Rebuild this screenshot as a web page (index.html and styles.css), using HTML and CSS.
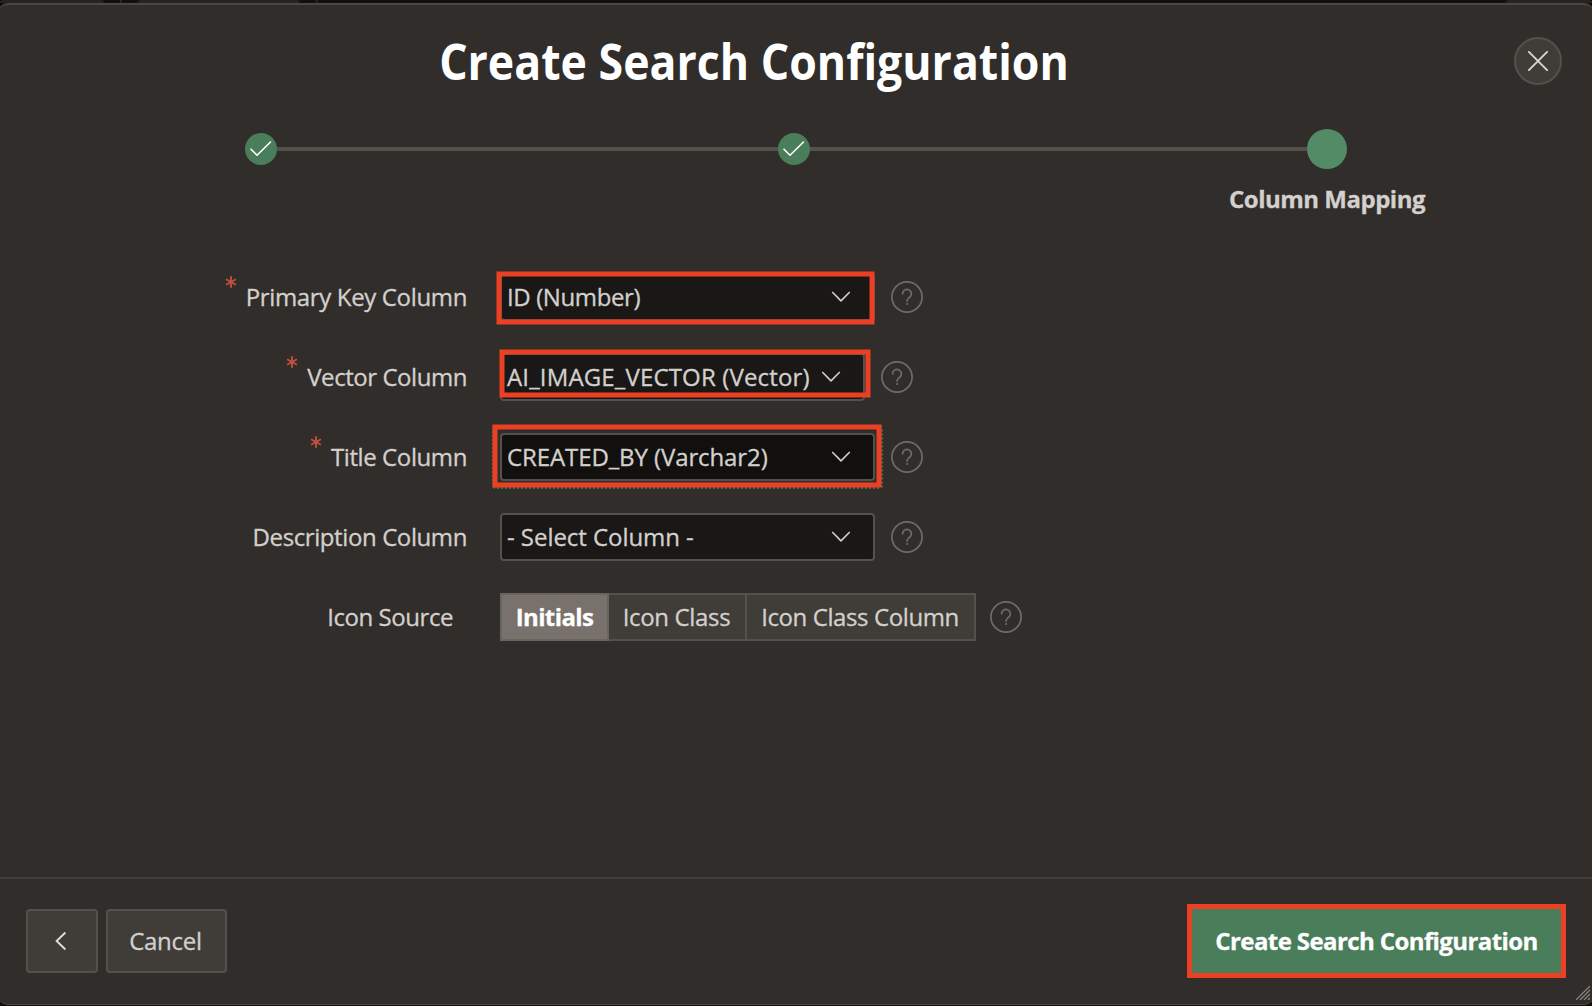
FILE: index.html
```
<!DOCTYPE html>
<html lang="en">
<head>
<meta charset="utf-8">
<title>Create Search Configuration</title>
<link rel="stylesheet" href="styles.css">
</head>
<body>
<svg class="defs" aria-hidden="true">
  <symbol id="check" viewBox="0 0 32 32"><path d="M6 16.2l6 6L25.5 9" fill="none" stroke="#fff" stroke-width="1.6" stroke-linecap="round" stroke-linejoin="round"/></symbol>
  <symbol id="chevron" viewBox="0 0 20 12"><path d="M1.7 1.5L10 9.8l8.3-8.3" fill="none" stroke="#cfccc8" stroke-width="1.7" stroke-linecap="round" stroke-linejoin="round"/></symbol>
  <symbol id="star" viewBox="0 0 12 12"><path d="M6 .3v11.4M1.1 3.2l9.8 5.6M10.9 3.2L1.1 8.8" fill="none" stroke="#c2513f" stroke-width="1.9"/></symbol>
  <symbol id="help" viewBox="0 0 32 32"><circle cx="16" cy="16" r="15.1" fill="none" stroke="#6f6c69" stroke-width="1.7"/><path d="M11.6 12.8a4.4 4.4 0 1 1 7.6 3c-1.4 1.3-3.1 1.7-3.1 4.3" fill="none" stroke="#6f6c69" stroke-width="1.7" stroke-linecap="round"/><circle cx="16.2" cy="23" r="1.1" fill="#6f6c69"/></symbol>
</svg>
<div class="backdrop"><i class="tab tab-a"></i><i class="rule"></i><i class="tab tab-b"></i><i class="rule"></i><i class="tab tab-c"></i></div>
<main class="dialog">
  <header class="header">
    <h1 class="title">Create Search Configuration</h1>
    <button class="close" aria-label="Close"><svg width="20" height="20" viewBox="0 0 20 20"><path d="M.9.9l18.2 18.2M19.1.9L.9 19.1" stroke="#d8d5d2" stroke-width="1.9" stroke-linecap="round"/></svg></button>
  </header>
  <div class="steps">
    <span class="step"><svg width="32" height="32"><use href="#check"/></svg></span>
    <span class="line"></span>
    <span class="step"><svg width="32" height="32"><use href="#check"/></svg></span>
    <span class="line"></span>
    <span class="step current"></span>
  </div>
  <div class="step-label">Column Mapping</div>
  <form class="form">
    <div class="row">
      <label class="label"><svg class="star" width="12" height="12"><use href="#star"/></svg><span class="pkc">Primary Key Column</span></label>
      <div class="select">ID (Number)<svg class="chevron" width="20" height="12"><use href="#chevron"/></svg><i class="mark mark-1"></i></div>
      <svg class="help" width="32" height="32"><use href="#help"/></svg>
    </div>
    <div class="row">
      <label class="label"><svg class="star" width="12" height="12"><use href="#star"/></svg><span class="vc">Vector Column</span></label>
      <div class="select vector"><span>AI_IMAGE_VECTOR (Vector)</span><svg class="chevron" width="20" height="12"><use href="#chevron"/></svg><i class="mark mark-2"></i></div>
      <svg class="help" width="32" height="32"><use href="#help"/></svg>
    </div>
    <div class="row">
      <label class="label"><svg class="star" width="12" height="12"><use href="#star"/></svg><span>Title Column</span></label>
      <div class="select focused"><span>CREATED_BY (Varchar2)</span><svg class="chevron" width="20" height="12"><use href="#chevron"/></svg><i class="mark mark-3"></i></div>
      <svg class="help" width="32" height="32"><use href="#help"/></svg>
    </div>
    <div class="row">
      <label class="label"><span>Description Column</span></label>
      <div class="select empty">- Select Column -<svg class="chevron" width="20" height="12"><use href="#chevron"/></svg></div>
      <svg class="help" width="32" height="32"><use href="#help"/></svg>
    </div>
    <div class="row">
      <label class="label icon-source"><span>Icon Source</span></label>
      <div class="pills"><span class="pill on">Initials</span><span class="pill mid">Icon Class</span><span class="pill last">Icon Class Column</span></div>
      <svg class="help pill-help" width="32" height="32"><use href="#help"/></svg>
    </div>
  </form>
  <footer class="footer">
    <button class="btn back" aria-label="Previous"><svg width="12" height="20" viewBox="0 0 12 20"><path d="M10.4 1.5L1.6 10l8.8 8.5" fill="none" stroke="#dedbd8" stroke-width="1.9"/></svg></button>
    <button class="btn cancel">Cancel</button>
    <button class="btn create">Create Search Configuration</button>
  </footer>
  <svg class="grip" width="14" height="14" viewBox="0 0 14 14"><path d="M0 14L14 0M4 14L14 4M8 14l6-6M12 14l2-2" stroke="#85817d" stroke-width="1.3"/></svg>
</main>
</body>
</html>
```
FILE: styles.css
```
* { box-sizing: border-box; }
body {
  margin: 0;
  width: 1592px;
  height: 1006px;
  overflow: hidden;
  background: #10100f;
  color: #d3d0cd;
  font: 400 24px/32px "Open Sans", "Noto Sans", sans-serif;
  letter-spacing: -0.4px;
  -webkit-text-stroke: .3px currentColor;
}
.defs { display: none; }
button { font: inherit; letter-spacing: inherit; color: inherit; padding: 0; }

.backdrop { display: flex; height: 3px; }
.tab { height: 3px; background: #262422; border-radius: 3px 3px 0 0; }
.tab-a { width: 104px; }
.tab-b { width: 162px; margin-left: 16px; }
.tab-c { width: 86px; margin-left: 1188px; }
.rule { width: 2px; margin-left: 16px; background: #262422; }

.dialog {
  position: relative;
  display: flex;
  flex-direction: column;
  height: 1002px;
  margin: 0 -2px;
  padding: 0 2px;
  background: #312d2a;
  border-top: 2px solid #4d4741;
  border-bottom: 1px solid #4d4741;
  border-radius: 10px;
}
.header {
  display: flex;
  align-items: center;
  height: 112px;
}
.title {
  flex: 1;
  margin: 0;
  text-align: center;
  color: #fff;
  font-size: 50px;
  line-height: 68px;
  font-weight: 700;
  letter-spacing: 0;
  transform: scaleX(.893);
  -webkit-text-stroke: 0;
}
.close {
  display: grid;
  place-items: center;
  width: 48px;
  height: 48px;
  margin: 0 30px 0 6px;
  background: #403c38;
  border: 2px solid #54504c;
  border-radius: 50%;
}

.steps { display: flex; align-items: center; height: 40px; margin: 12px 245px 0; }
.step { display: grid; width: 32px; height: 32px; border-radius: 50%; background: #4a7d59; }
.current { width: 40px; height: 40px; background: #528b65; }
.line { flex: 1; height: 4px; background: #54504c; }
.line:nth-of-type(2) { flex: none; width: 501px; }
.step-label {
  width: 220px;
  margin: 14px 0 0 1217px;
  text-align: center;
  font-weight: 700;
  line-height: 32px;
  letter-spacing: -.5px;
}

.form { flex: 1; padding-top: 42px; }
.row { display: flex; align-items: center; height: 80px; }
.label { display: flex; justify-content: flex-end; align-items: center; width: 467px; margin-right: 33px; }
.icon-source { width: 453px; margin-right: 47px; letter-spacing: -.45px; }
.star { margin: -31px 9px 0 0; }
.pkc { letter-spacing: -.35px; }
.vc { letter-spacing: -.45px; }

.select {
  position: relative;
  display: flex;
  align-items: center;
  justify-content: space-between;
  width: 375px;
  height: 48px;
  padding: 0 22px 0 5px;
  background: #1a1816;
  border: 2px solid #54504c;
  border-radius: 4px;
}
.vector { width: 365px; letter-spacing: .15px; }
.focused { background: #11100e; letter-spacing: -.1px; }
.empty { letter-spacing: -.05px; }
.focused::after {
  content: "";
  position: absolute;
  inset: -10px;
  border: 2px dotted #457353;
  border-radius: 4px;
}
.mark { position: absolute; z-index: 1; border: 5px solid #eb4023; }
.mark-1 { left: -5px; top: -3px; width: 378px; height: 53px; transform: translate(-.5px, -.5px); }
.mark-2 { left: -2px; top: -6px; width: 371px; height: 48px; transform: translate(-.5px, .5px); }
.mark-3 { left: -9px; top: -11px; width: 389px; height: 63px; transform: translate(-.5px, .5px); }
.help { margin-left: 15.5px; }

.pills { display: flex; height: 48px; border: 2px solid #54504c; background: #403c38; }
.pill { display: grid; place-items: center; border-right: 2px solid #54504c; }
.on { width: 109px; margin: -2px 0 -2px -2px; background: #78716c; color: #fff; font-weight: 700; letter-spacing: -.6px; border: 2px solid #6a645f; }
.mid { width: 138px; padding-right: 1px; letter-spacing: -.35px; }
.last { width: 227px; padding-right: 1px; letter-spacing: -.4px; border: 0; }
.pill-help { margin-left: 14px; }

.footer {
  display: flex;
  align-items: center;
  gap: 8px;
  height: 127px;
  padding: 0 31px 2px 26px;
  border-top: 2px solid #403c38;
}
.btn { height: 64px; background: #403c38; border: 2px solid #54504c; border-radius: 4px; }
.back { width: 72px; display: grid; place-items: center; padding-right: 3px; }
.cancel { width: 121px; padding-right: 2px; letter-spacing: -.25px; }
.create {
  width: 369px;
  margin-left: auto;
  background: #4a7d59;
  border: 0;
  border-radius: 0;
  color: #fff;
  font-weight: 700;
  letter-spacing: -.6px;
  outline: 5px solid #eb4023;
}
.grip { position: absolute; right: 4px; bottom: 4px; }
```
